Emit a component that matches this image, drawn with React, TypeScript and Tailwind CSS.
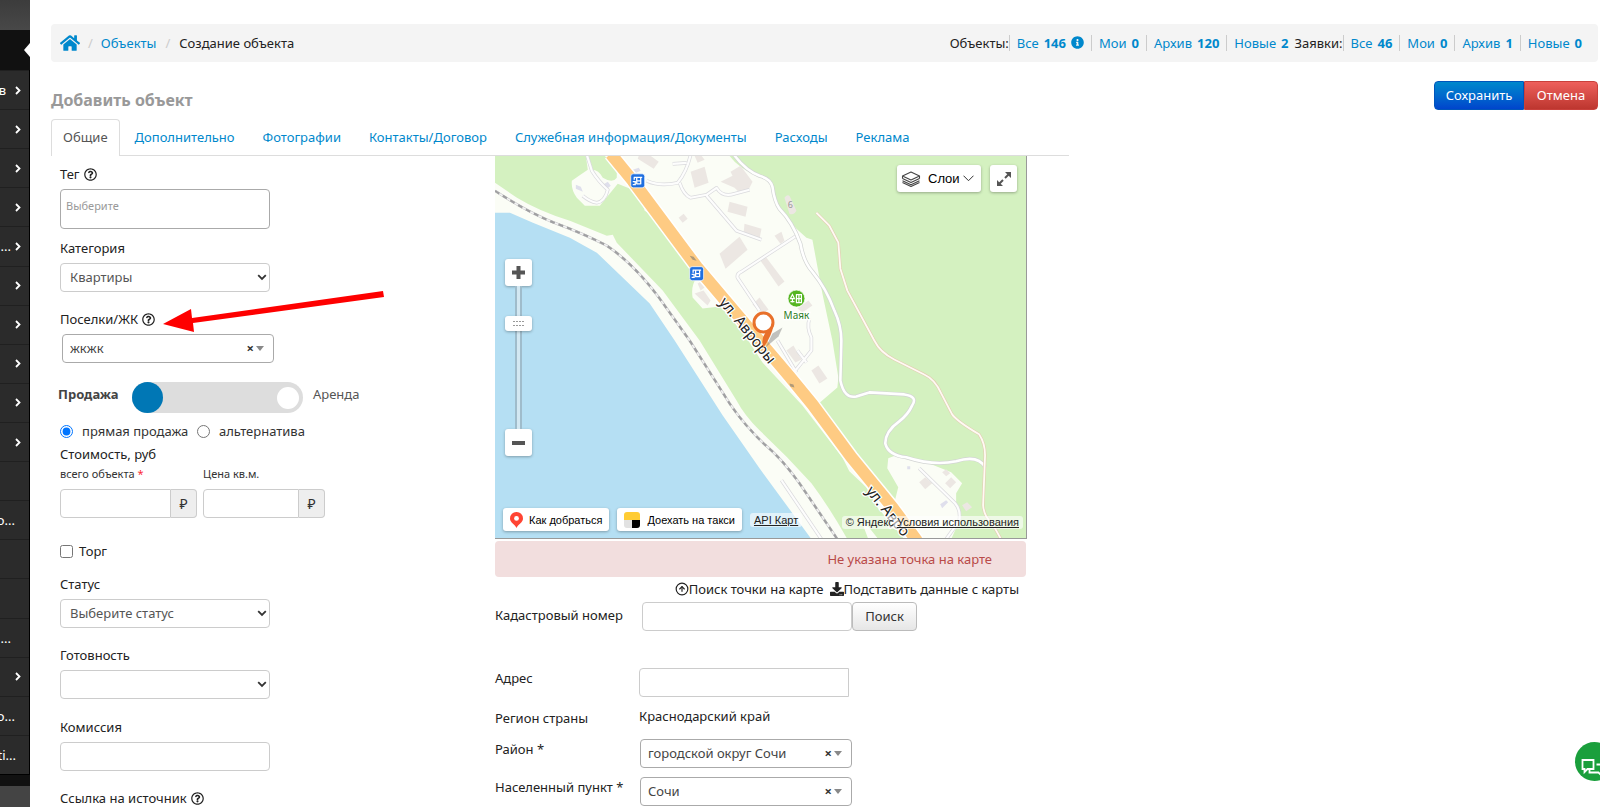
import React from "react";
import { FaHome, FaInfoCircle, FaRegQuestionCircle, FaDownload } from "react-icons/fa";
import { LuCircleArrowUp } from "react-icons/lu";

type MenuItem = { text?: string; arrow?: boolean; space?: string };

const menu: MenuItem[] = [
  { text: "в", arrow: true, space: "mr-[9px]" },
  { arrow: true },
  { arrow: true },
  { arrow: true },
  { text: "...", arrow: true },
  { arrow: true },
  { arrow: true },
  { arrow: true },
  { arrow: true },
  { arrow: true },
  {},
  { text: "о...", space: "mr-[6px]" },
  {},
  {},
  { text: "...", space: "mr-[10px]" },
  { arrow: true },
  { text: "о...", space: "mr-[6px]" },
  { text: "ti...", space: "mr-[5px]" },
];

function Sidebar() {
  return (
    <nav aria-label="Меню" className="flex w-[30px] shrink-0 flex-col overflow-hidden bg-[#444] text-white">
      <div className="h-[30px] bg-linear-to-b from-[#3c3c3c] to-[#484848]" />
      <div className="flex h-10 items-center justify-end bg-[#111]">
        <svg width="6" height="14" viewBox="0 0 6 14" aria-hidden="true">
          <path d="M6 0v14L0 7z" fill="#fff" />
        </svg>
      </div>
      <ul className="flex h-[705px] flex-col border-b border-r border-black bg-[#2b2b2b]">
        {menu.map((m, i) => (
          <li key={i} className="flex flex-1 items-center justify-end border-t border-[#202020] pr-2 text-[13px] leading-4">
            {(m.text || m.arrow) && (
              <a href="#menu" className="flex items-center justify-end whitespace-nowrap">
                {m.text && <span className={m.space ?? "mr-1"}>{m.text}</span>}
                {m.arrow && (
                  <svg width="6" height="9" viewBox="0 0 6 9" aria-hidden="true">
                    <path d="M1 1l3.500 3.500L1 8" fill="none" stroke="#fff" strokeWidth="1.800" />
                  </svg>
                )}
              </a>
            )}
          </li>
        ))}
      </ul>
      <div className="h-[11px] bg-[#111]" />
    </nav>
  );
}

function Counter({ name, n, info, first }: { name: string; n: number; info?: boolean; first?: boolean }) {
  return (
    <a
      href="#list"
      className={
        "flex h-4 items-center gap-[5px] border-l border-[#ccc] pl-[7px] text-[#0088cc] " + (first ? "" : "ml-[7px]")
      }
    >
      {name} <b>{n}</b>
      {info && <FaInfoCircle size={13} />}
    </a>
  );
}

function Breadcrumb() {
  return (
    <div className="mr-[2px] flex h-[38px] items-center justify-between rounded bg-[#f4f4f4] pb-[1px] pl-[9px] pr-4">
      <div className="flex items-center">
        <a href="#home" aria-label="Главная" className="text-[#0088cc]">
          <FaHome size={20} />
        </a>
        <span className="px-2 text-[#ccc]">/</span>
        <a href="#objects" className="text-[#0088cc]">Объекты</a>
        <span className="px-[9px] text-[#ccc]">/</span>
        <span>Создание объекта</span>
      </div>
      <div className="flex items-center whitespace-nowrap">
        <span>Объекты:</span>
        <Counter name="Все" n={146} info first />
        <Counter name="Мои" n={0} />
        <Counter name="Архив" n={120} />
        <Counter name="Новые" n={2} />
        <span className="ml-[6px]">Заявки:</span>
        <Counter name="Все" n={46} first />
        <Counter name="Мои" n={0} />
        <Counter name="Архив" n={1} />
        <Counter name="Новые" n={0} />
      </div>
    </div>
  );
}

const tabs = ["Дополнительно", "Фотографии", "Контакты/Договор", "Служебная информация/Документы", "Расходы", "Реклама"];

const field = "h-[29px] rounded border border-[#ccc] bg-white text-[#555]";

function Chevron() {
  return (
    <svg className="pointer-events-none absolute right-[3px] top-[11px]" width="10" height="7" viewBox="0 0 10 7" aria-hidden="true">
      <path d="M1.200 1.200L5 5l3.800-3.800" fill="none" stroke="#333" strokeWidth="1.800" />
    </svg>
  );
}

function Select({ id, value }: { id: string; value: string }) {
  return (
    <div className="relative w-[210px]">
      <select id={id} className={field + " w-full appearance-none pb-[2px] pl-[9px]"}>
        <option>{value}</option>
      </select>
      <Chevron />
    </div>
  );
}

function ClearSelect({ id, value }: { id: string; value: string }) {
  return (
    <div className="relative w-[212px]">
      <select id={id} className="h-[29px] w-full appearance-none rounded border border-[#aaa] bg-white pb-[1px] pl-[7px] text-[#444]">
        <option>{value}</option>
      </select>
      <button type="button" aria-label="Очистить" className="absolute right-5 top-[5px] text-[13px] font-bold leading-[18px] text-[#333]">
        ×
      </button>
      <svg className="pointer-events-none absolute right-[10px] top-[12px]" width="8" height="5" viewBox="0 0 8 5" aria-hidden="true">
        <path d="M0 0h8L4 5z" fill="#888" />
      </svg>
    </div>
  );
}

function Money({ id, width }: { id: string; width: string }) {
  return (
    <div className="flex h-[29px]">
      <input id={id} className={"rounded-l border border-[#ccc] " + width} />
      <span className="flex w-[26px] items-center justify-center rounded-r border border-l-0 border-[#ccc] bg-[#eee] text-sm text-[#333]">₽</span>
    </div>
  );
}

function Help() {
  return <FaRegQuestionCircle size={13} className="mb-[2px] ml-1 inline-block" />;
}

const thin = [
  "M92 -1L97 15Q104 26 113 34Q110 46 102 47Q95 46 88 40",
  "M152 25Q165 31 183 27Q192 16 196 -1M178 8L192 7",
  "M185 27Q189 39 196 42L212 39L222 32Q228 42 240 38L255 34M212 40L242 75L267 84",
  "M265 155L243 122Q242 118 247 116L302 80",
  "M283 185L302 217M315 163Q312 172 317 182L317 195L297 220M303 195L312 207",
  "M425 313L461 348Q467 355 465 366L452 384M287 325L327 384",
];
const hillRoad =
  "M228 -20Q244 12 265 20Q276 23 278 31Q280 46 285 53Q298 66 306 88Q309 106 318 116Q332 133 340 155Q347 170 347 185L346 225Q350 244 362 241L375 237L410 239Q424 241 418 250Q414 259 405 266Q391 276 391 288Q394 300 412 302Q440 311 462 306Q484 299 491 312";
const trail =
  "M322 57L335 70L344 87L346 113L353 135L380 185Q386 197 400 204L430 219Q441 224 447 238L458 259Q463 266 485 279Q491 288 491 300L489 350Q490 362 498 368L507 384";
const rail =
  "M0 35Q35 58 62 68T112 90Q139 108 165 143L195 185L235 248Q250 270 270 289Q287 303 305 328L343 384";
const mainRoad = "M116 -2L138 25L202 111L295 221L318 249L357 302L398 352L423 386";
const buildings = [
  "M143 3l16 10 5-7-8-6h-12z", "M196 16l14-5 4 16-14 5z", "M226 26l12-6-2-4 10-6 6 8 6 8-4 8-10 2-4-4z",
  "M235 46l18 5-2 10-18-5z", "M250 68l17 5-2 10-16-5z", "M225 98l20-17 8 13-22 19z", "M184 62l5-4 4 5-5 4z",
  "M203 128l8-5 3 6-8 6zM200 138l9-3 7 10-3 5z", "M200 0h7l3 4-7 3z", "M266 105l6-3 18 24-6 5z",
  "M258 149l7-7 9 12-6 5z", "M280 80l7-4 3 9-4 3z", "M290 42q4-5 6 0l6 13q-3 5-7 3z",
  "M303 153l11-8 4 5-10 7z", "M292 195l7-5 8 14-6 3z", "M317 215l7-5 9 13-8 5z", "M425 327l6-5 7 6-7 6z",
  "M451 328l6-6 5 5-6 6z", "M448 317l4-3 4 4-4 3z", "M468 350l5-3 5 5-6 4z",
];

function BusStop({ x, y }: { x: number; y: number }) {
  return (
    <g transform={`translate(${x} ${y})`}>
      <rect x="-7" y="-7" width="14" height="14" rx="2.500" fill="#1f6fe0" stroke="#fff" strokeOpacity=".7" />
      <path d="M-4 -3.500H4.500M-3.500 -1V-3.500M-1 -3.500V3.500M3 -3.500V3.500M-1 3H3M-1 0H3M-5 .8H-2.500V3.800H-5" fill="none" stroke="#fff" strokeWidth="1.300" />
    </g>
  );
}

function MapDrawing() {
  return (
    <svg className="block h-full w-full" viewBox="0 0 532 383" preserveAspectRatio="xMidYMid slice" aria-label="Карта" role="img">
      <rect width="532" height="383" fill="#fbfdf6" />
      <path d="M0 57H15L38 67L75 82L102 97L155 148L180 185L228 260L265 313L317 384H0z" fill="#b5dff3" />
      <path d="M0 0H91L93 14Q84 20 77 25Q76 34 82 42L90 50H105L123 28L138 34L147 45L150 55L155 58L197 110L202 122Q196 130 198 142L208 153L225 151L240 164L268 207L308 250L348 302L355 316L372 332L383 352L410 384H384L365 360L374 384H353Q335 352 317 328Q292 300 265 275Q250 260 242 245L205 185L168 135L122 87L118 79L112 80L75 65Q45 56 22 42L0 27z" fill="#d4f1c0" />
      <path d="M90 0H110L122 14V22Q118 28 108 22Q104 14 97 14z" fill="#d4f1c0" />
      <path d="M235 0Q245 14 265 20L277 28L285 53L302 73L312 82L318 84L328 138L338 185L344 222L343 232L322 250L375 318L400 348L404 332L393 313L394 303L402 300L432 307L457 317L468 328L462 338L462 348L467 362L457 384H532V0z" fill="#d4f1c0" />
      <g fill="#ece7e3">
        {buildings.map((d) => <path key={d} d={d} />)}
      </g>
      <path
        d="M81 29l5 2 2 5-7-3zM108 29l5-3 3 4-5 4zM138 14l6-2 2 3-7 3zM446 349l6-4 2 2-6 6zM413 311h3v3h-3z"
        fill="#dfdfec"
      />
      <g fill="none" strokeLinejoin="round">
        {thin.map((d) => <path key={d} d={d} stroke="#dadadd" strokeWidth="3.600" />)}
        {thin.map((d) => <path key={d} d={d} stroke="#fdfdfd" strokeWidth="2.200" />)}
        <path d={hillRoad} stroke="#d3d5d4" strokeWidth="4" />
        <path d={hillRoad} stroke="#fff" strokeWidth="2.600" />
        <path d={trail} stroke="#e3cdb2" strokeWidth="3" />
        <path d={trail} stroke="#fffaf4" strokeWidth="1.800" />
        <path d={rail} stroke="#c4c4c6" strokeWidth="2.600" />
        <path d={rail} stroke="#f4f4f4" strokeWidth="1.400" />
        <path d={rail} stroke="#a0a0a2" strokeWidth="2.200" strokeDasharray="5 4" />
        <path d={mainRoad} stroke="#fff" strokeWidth="15" />
        <path d={mainRoad} stroke="#fecb83" strokeWidth="12" />
      </g>
      <path d="M195 100l4 1 3 4-4-1zM295 228l4 1 1 3-4-1z" fill="#b19a78" />
      <BusStop x={143} y={25} />
      <BusStop x={202} y={118} />
      <g fontFamily="'Noto Sans', sans-serif" fill="#222" stroke="#fff" strokeWidth="2.500" paintOrder="stroke" fontSize="15">
        <text transform="translate(224 147) rotate(51)">ул. Авроры</text>
        <text transform="translate(371 336) rotate(51)">ул. Авро</text>
        <text x="302" y="163" textAnchor="middle" fontSize="10" fill="#2c7d26">Маяк</text>
        <text x="296" y="52" textAnchor="middle" fontSize="9" fill="#999" strokeWidth="0">6</text>
      </g>
      <circle cx="302" cy="143" r="8.500" fill="#55b521" stroke="#fff" strokeOpacity=".7" />
      <path d="M296 143l2-4 2 4zM298 143v4M296 146h4M302 139h5v8h-5zM302 143h5M304.500 139v8" fill="none" stroke="#fff" strokeWidth="1.200" />
      <path d="M271 192L278 178L288 172L284 181z" fill="#777" fillOpacity=".45" />
      <path d="M269 192Q277 181 279 170L271 177Q266 184 269 192z" fill="#e8702a" />
      <circle cx="269" cy="167" r="9.500" fill="#fff" stroke="#e8702a" strokeWidth="3" />
    </svg>
  );
}

const mapBtn = "flex items-center rounded-[3px] bg-white text-black shadow-[0_1px_3px_rgba(0,0,0,0.3)]";

function YandexMap() {
  return (
    <div className="relative h-[383px] overflow-hidden border-b border-r border-[#999] font-['Liberation_Sans',sans-serif] text-[11px] leading-4">
      <MapDrawing />
      <div className="absolute right-[9px] top-[9px] flex gap-[9px]">
        <button type="button" className={mapBtn + " h-[27px] w-[84px] gap-[7px] pl-1 text-[13px]"}>
          <svg width="20" height="18" viewBox="0 0 20 18" aria-hidden="true" fill="none" stroke="#444" strokeWidth="1.100" strokeLinejoin="round">
            <path d="M10 2l8.500 4L10 10 1.500 6zM1.500 8.500L10 12.500l8.500-4M1.500 10.800L10 14.800l8.500-4M1.500 6v2.500M18.500 6v2.500M1.500 12.500L10 16.500l8.500-4" />
          </svg>
          Слои
          <svg className="-ml-1" width="11" height="7" viewBox="0 0 11 7" aria-hidden="true">
            <path d="M.5 .7L5.500 5.700l5-5" fill="none" stroke="#333" />
          </svg>
        </button>
        <button type="button" aria-label="На весь экран" className={mapBtn + " h-[27px] w-[27px] justify-center"}>
          <svg width="14" height="14" viewBox="0 0 14 14" aria-hidden="true" fill="#555" stroke="#555" strokeWidth="2">
            <path stroke="none" d="M8 0h6v6zM0 8v6h6z" />
            <path d="M8 6l4-4M6 8l-4 4" />
          </svg>
        </button>
      </div>
      <div className="absolute left-[10px] top-[103px] flex w-[27px] flex-col items-center">
        <button type="button" aria-label="Приблизить" className={mapBtn + " h-[27px] w-[27px] justify-center"}>
          <svg width="13" height="13" viewBox="0 0 13 13" aria-hidden="true">
            <path d="M6.500 0v13M0 6.500h13" stroke="#555" strokeWidth="4" />
          </svg>
        </button>
        <div className="relative h-[143px] w-[7px] border-x-2 border-[#9fbccb] bg-[#d3e8f2]">
          <div className="absolute -left-[12px] top-[30px] flex h-[15px] w-[27px] items-center justify-center rounded-[3px] bg-white shadow-[0_1px_3px_rgba(0,0,0,0.3)]">
            <svg width="11" height="5" viewBox="0 0 11 5" aria-hidden="true">
              <path d="M0 .5h11M0 4.500h11" stroke="#999" strokeDasharray="2 1" />
            </svg>
          </div>
          <input type="range" aria-label="Масштаб" defaultValue={75} className="absolute -left-[10px] top-0 h-full w-[23px] opacity-0 [direction:rtl] [writing-mode:vertical-lr]" />
        </div>
        <button type="button" aria-label="Отдалить" className={mapBtn + " h-[27px] w-[27px] justify-center"}>
          <svg width="13" height="4" viewBox="0 0 13 4" aria-hidden="true">
            <path d="M0 2h13" stroke="#555" strokeWidth="4" />
          </svg>
        </button>
      </div>
      <div className="absolute bottom-[7px] left-[8px] flex items-center gap-2">
        <button type="button" className={mapBtn + " h-[23px] gap-[6px] px-[7px]"}>
          <svg width="13" height="16" viewBox="0 0 13 16" aria-hidden="true">
            <path d="M6.500 0a6.400 6.400 0 0 1 6.500 6.400c0 4-4.500 5.200-6.500 9.600C4.500 11.600 0 10.400 0 6.400A6.400 6.400 0 0 1 6.500 0z" fill="#f43" />
            <circle cx="6.500" cy="6.400" r="2.400" fill="#fff" />
          </svg>
          Как добраться
        </button>
        <button type="button" className={mapBtn + " h-[23px] gap-[7px] px-[7px]"}>
          <svg width="16" height="16" viewBox="0 0 16 16" aria-hidden="true">
            <path d="M0 8V3a3 3 0 0 1 3-3h10a3 3 0 0 1 3 3v5z" fill="#fc3" />
            <path d="M0 8h8v8H3a3 3 0 0 1-3-3z" fill="#e2e2e2" />
            <path d="M8 8h8v5a3 3 0 0 1-3 3H8z" fill="#000" />
          </svg>
          Доехать на такси
        </button>
        <a href="#api" className="rounded-[3px] bg-white/60 px-1 leading-[14px] underline">API Карт</a>
      </div>
      <div className="absolute bottom-[9px] right-[3px] rounded-[3px] bg-white/60 px-1 text-[11px] leading-[13px]">
        © Яндекс <a href="#terms" className="underline">Условия использования</a>
      </div>
    </div>
  );
}

function Row({ label, id, children, className }: { label: string; id: string; children: React.ReactNode; className: string }) {
  return (
    <div className={"flex items-start " + className}>
      <label htmlFor={id} className="w-[144px] shrink-0 whitespace-nowrap">{label}</label>
      {children}
    </div>
  );
}

export default function App() {
  return (
    <div className="relative flex h-screen overflow-hidden bg-white font-['Noto_Sans',sans-serif] text-[13px] leading-5 text-[#222]">
      <Sidebar />
      <main className="min-w-0 flex-1 pl-[21px] pt-6">
        <Breadcrumb />
        <div className="mr-[2px] flex h-[57px] items-start justify-between pt-[19px]">
          <h1 className="pt-[9px] text-base font-bold leading-5 text-[#999]">Добавить объект</h1>
          <div className="flex h-[29px] text-white">
            <button type="button" className="w-[90px] rounded-l border border-[#0055bb] bg-linear-to-b from-[#0088cc] to-[#0044cc] pb-[2px]">Сохранить</button>
            <button type="button" className="w-[74px] rounded-r border border-[#c9403b] bg-linear-to-b from-[#ee5f5b] to-[#bd362f] pb-[2px]">Отмена</button>
          </div>
        </div>
        <div className="flex h-[37px] w-[1018px] border-b border-[#ddd]">
          <a href="#common" className="mr-[2px] h-[37px] rounded-t border border-b-0 border-[#ddd] bg-white px-[11px] pt-[7px] text-[#555]">Общие</a>
          {tabs.map((t) => (
            <a key={t} href="#tab" className="mr-[2px] whitespace-nowrap px-[13px] pt-2 text-[#0088cc]">{t}</a>
          ))}
        </div>
        <div className="flex">
          <form className="flex w-[444px] shrink-0 flex-col items-start pl-[9px] pt-2">
            <label htmlFor="tag">Тег<Help /></label>
            <input id="tag" placeholder="Выберите" className="mt-[5px] h-10 w-[210px] rounded border border-[#aaa] px-[5px] pb-2 text-[11px] placeholder:text-[#999]" />
            <label htmlFor="cat" className="mb-[5px] mt-[9px]">Категория</label>
            <Select id="cat" value="Квартиры" />
            <label htmlFor="jk" className="mb-[5px] mt-[17px]">Поселки/ЖК<Help /></label>
            <div className="ml-[2px]"><ClearSelect id="jk" value="жкжк" /></div>
            <label className="-ml-[2px] mt-[19px] flex h-[31px] cursor-pointer text-[#555]">
              <b className="w-[74px] pt-[2px] text-[#444]">Продажа</b>
              <input type="checkbox" role="switch" className="sr-only" />
              <span className="flex h-[31px] w-[171px] items-center justify-between rounded-full bg-[#ddd] pr-1">
                <span className="h-[31px] w-[31px] rounded-full bg-[#0077b5]" />
                <span className="h-[22px] w-[22px] rounded-full bg-white" />
              </span>
              <span className="pl-[10px] pt-[2px]">Аренда</span>
            </label>
            <div className="mt-2 flex h-5 items-center text-[#333]">
              <label className="flex w-[137px] items-center gap-[9px] whitespace-nowrap"><input type="radio" name="deal" defaultChecked className="h-[13px] w-[13px]" />прямая продажа</label>
              <label className="flex items-center gap-[9px]"><input type="radio" name="deal" className="h-[13px] w-[13px]" />альтернатива</label>
            </div>
            <p className="mt-[3px]">Стоимость, руб</p>
            <div className="flex gap-[6px] pt-[1px] text-[#333]">
              <div className="flex w-[137px] flex-col">
                <label htmlFor="total" className="mb-[6px] text-[11px] leading-[18px]">всего объекта <span className="text-red-500">*</span></label>
                <Money id="total" width="w-[111px]" />
              </div>
              <div className="flex w-[122px] flex-col">
                <label htmlFor="sqm" className="mb-[6px] text-[11px] leading-[18px]">Цена кв.м.</label>
                <Money id="sqm" width="w-[96px]" />
              </div>
            </div>
            <label className="mt-[23px] flex items-center gap-[6px]"><input type="checkbox" className="h-[13px] w-[13px]" />Торг</label>
            <label htmlFor="status" className="mb-[5px] mt-[13px]">Статус</label>
            <Select id="status" value="Выберите статус" />
            <label htmlFor="ready" className="mb-[5px] mt-[17px]">Готовность</label>
            <Select id="ready" value="" />
            <label htmlFor="fee" className="mb-[5px] mt-[18px]">Комиссия</label>
            <input id="fee" className={field + " w-[210px] px-[10px]"} />
            <label className="mt-[18px] leading-[18px]">Ссылка на источник<Help /></label>
          </form>
          <section className="flex w-[532px] shrink-0 flex-col">
            <YandexMap />
            <p className="mr-[1px] mt-[2px] h-9 rounded bg-[#f2dede] pr-[34px] pt-2 text-right text-[#b94a48]">Не указана точка на карте</p>
            <div className="mt-[2px] flex h-5 justify-end gap-[6px] whitespace-nowrap pr-2">
              <a href="#find" className="flex items-center"><LuCircleArrowUp size={14} strokeWidth={2} />Поиск точки на карте</a>
              <a href="#fill" className="flex items-center"><FaDownload size={14} />Подставить данные с карты</a>
            </div>
            <div className="mt-[3px] flex">
              <label htmlFor="kad" className="w-[147px] pt-[3px]">Кадастровый номер</label>
              <input id="kad" className={field + " w-[210px] px-2"} />
              <button type="button" className="h-[29px] w-[65px] rounded border border-[#bbb] bg-linear-to-b from-white to-[#e6e6e6] pb-[2px] text-[#333]">Поиск</button>
            </div>
            <Row label="Адрес" id="addr" className="mt-[37px] h-[38px]">
              <input id="addr" className={field + " w-[210px] rounded-r-none px-2"} />
            </Row>
            <div className="flex h-[33px]">
              <span className="w-[144px] pt-[2px]">Регион страны</span>
              <span>Краснодарский край</span>
            </div>
            <Row label="Район *" id="area" className="h-[38px]"><div className="ml-[1px]"><ClearSelect id="area" value="городской округ Сочи" /></div></Row>
            <Row label="Населенный пункт *" id="city" className="h-[29px]"><div className="ml-[1px]"><ClearSelect id="city" value="Сочи" /></div></Row>
          </section>
        </div>
      </main>
      <svg className="pointer-events-none absolute left-[160px] top-[288px]" width="226" height="46" viewBox="160 288 226 46" aria-hidden="true">
        <path d="M163 324L191 309L192 318L383 291L384 297L193 323L194 332z" fill="#fe0000" />
      </svg>
      <button type="button" aria-label="Чат" className="absolute -right-[14px] top-[742px] h-[39px] w-[39px] rounded-full bg-[#1a9f3c]">
        <svg width="39" height="39" viewBox="0 0 39 39" fill="none" stroke="#fff" strokeWidth="1.800" aria-hidden="true">
          <path d="M7.500 18h11v9h-6l-3 3v-3h-2zM21.500 22.500h7v8h-2v3l-3-3h-9v-3" />
        </svg>
      </button>
    </div>
  );
}
